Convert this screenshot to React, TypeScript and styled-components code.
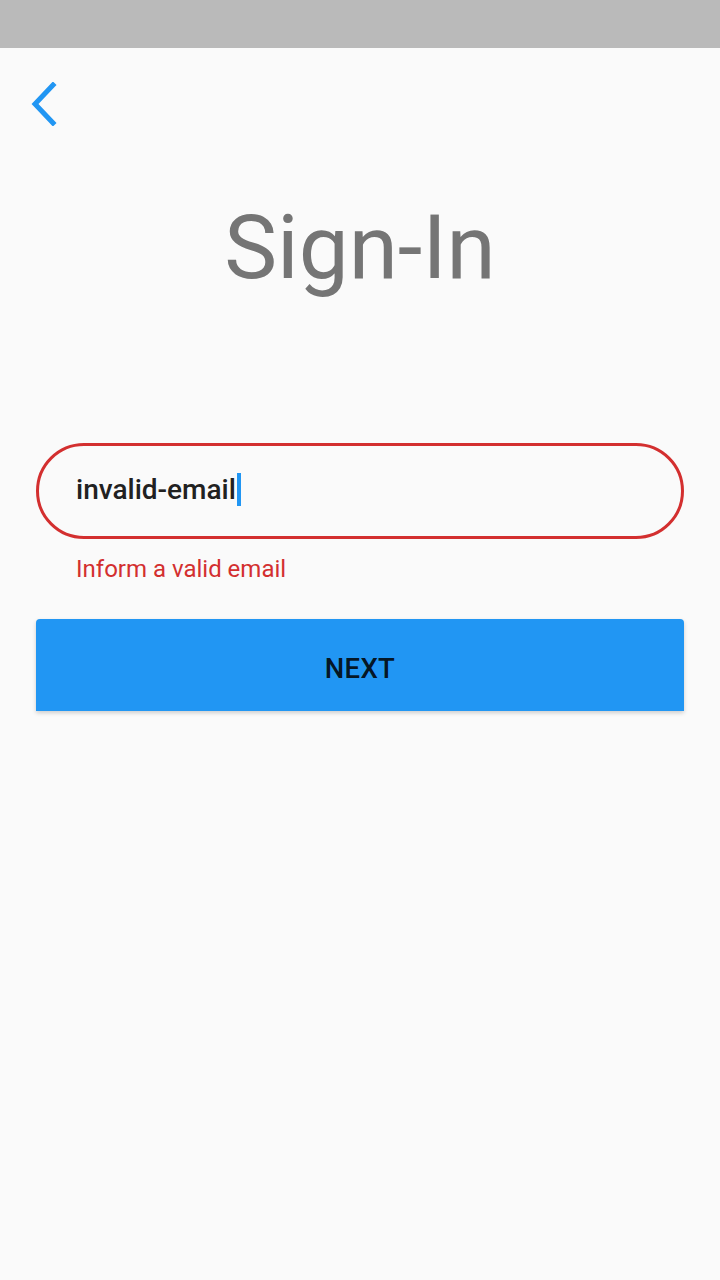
import React from "react";
import styled, { createGlobalStyle } from "styled-components";

const Global = createGlobalStyle`
  html, body { margin: 0; padding: 0; background: #fafafa; }
  body { font-family: Roboto, "Noto Sans", sans-serif; }
  * { box-sizing: border-box; }
`;

const Screen = styled.div`
  width: 720px;
  height: 1280px;
  display: flex;
  flex-direction: column;
  background: #fafafa;
  overflow: hidden;
`;

const StatusBar = styled.div`
  height: 48px;
  background: #bababa;
  flex-shrink: 0;
`;

const TopBar = styled.div`
  height: 112px;
  display: flex;
  align-items: center;
  padding-left: 28px;
`;

const BackButton = styled.button`
  width: 34px;
  height: 48px;
  border: none;
  background: transparent;
  padding: 0;
  display: flex;
  align-items: center;
  justify-content: flex-start;
`;

const Title = styled.h1`
  margin: 28px 0 0;
  text-align: center;
  font-family: Roboto, sans-serif;
  font-weight: 400;
  font-size: 89px;
  line-height: 120px;
  color: #757575;
`;

const Form = styled.div`
  margin-top: 135px;
  padding: 0 36px;
  display: flex;
  flex-direction: column;
`;

const Field = styled.div`
  height: 96px;
  border: 3.5px solid #d32f2f;
  border-radius: 48px;
  display: flex;
  align-items: center;
  padding-left: 37px;
  padding-bottom: 4px;
`;

const FieldText = styled.span`
  font-family: Roboto, sans-serif;
  font-size: 28px;
  font-weight: 500;
  color: #212121;
`;

const Caret = styled.span`
  display: inline-block;
  width: 4px;
  height: 33px;
  background: #2196f3;
  margin-left: 1px;
  vertical-align: -7px;
`;

const ErrorText = styled.div`
  margin-top: 16px;
  padding-left: 40px;
  font-family: Roboto, sans-serif;
  font-size: 24px;
  line-height: 28px;
  color: #d32f2f;
`;

const NextButton = styled.button`
  margin-top: 36px;
  height: 92px;
  width: 100%;
  border: none;
  border-radius: 4px 4px 0 0;
  background: #2196f3;
  box-shadow: 0 2px 4px rgba(0, 0, 0, 0.18);
  font-family: Roboto, sans-serif;
  font-size: 27.5px;
  font-weight: 500;
  color: rgba(0, 0, 0, 0.87);
  letter-spacing: 0.3px;
  display: flex;
  align-items: center;
  justify-content: center;
  padding-top: 8px;
`;

export default function App() {
  return (
    <>
      <Global />
      <Screen>
        <StatusBar />
        <TopBar>
          <BackButton aria-label="Back">
            <svg width="30" height="44" viewBox="0 0 30 44">
              <path d="M25 3 L7 22 L25 41" fill="none" stroke="#2196f3" strokeWidth="5" strokeLinecap="square" />
            </svg>
          </BackButton>
        </TopBar>
        <Title>Sign-In</Title>
        <Form>
          <Field>
            <FieldText>
              invalid-email<Caret />
            </FieldText>
          </Field>
          <ErrorText>Inform a valid email</ErrorText>
          <NextButton>NEXT</NextButton>
        </Form>
      </Screen>
    </>
  );
}
